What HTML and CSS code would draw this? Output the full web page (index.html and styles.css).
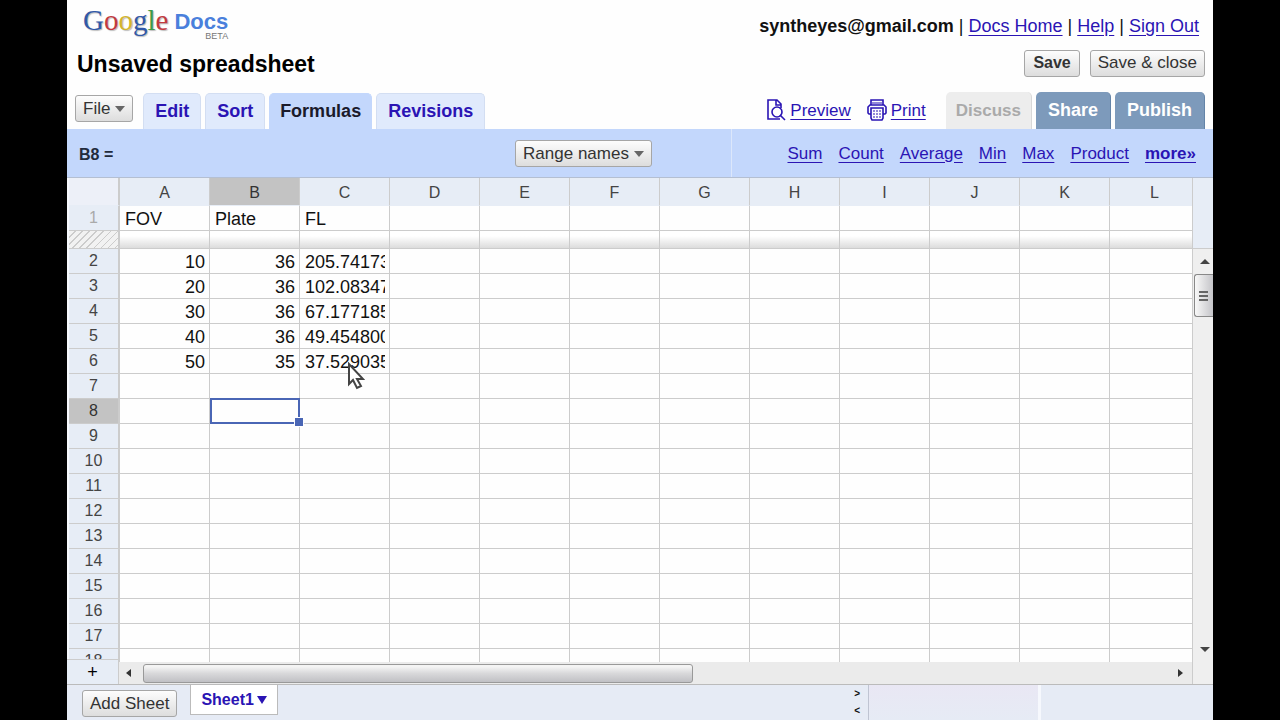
FILE: index.html
```html
<!DOCTYPE html>
<html lang="en">
<head>
  <meta charset="UTF-8" />
  <meta name="viewport" content="width=device-width, initial-scale=1.0"/>
  <title>Unsaved spreadsheet - Google Docs</title>
  <link rel="stylesheet" href="styles.css">
</head>
<body>
  <div class="app">
    <header class="header">
      <div class="top-bar">
        <div class="logo">
          <span class="logo-google"><span class="g-blue">G</span><span class="g-red">o</span><span class="g-yellow">o</span><span class="g-blue">g</span><span class="g-green">l</span><span class="g-red">e</span></span>
          <span class="logo-docs">Docs<small>BETA</small></span>
        </div>
        <div class="account"><b>syntheyes@gmail.com</b> | <a href="#">Docs Home</a> | <a href="#">Help</a> | <a href="#">Sign Out</a></div>
      </div>
      <div class="title-bar">
        <h1>Unsaved spreadsheet</h1>
        <div class="save-buttons">
          <button class="btn save">Save</button>
          <button class="btn">Save &amp; close</button>
        </div>
      </div>
      <div class="tab-bar">
        <button class="btn file">File <i class="caret"></i></button>
        <nav class="tabs">
          <a class="tab" href="#">Edit</a>
          <a class="tab" href="#">Sort</a>
          <a class="tab active" href="#">Formulas</a>
          <a class="tab" href="#">Revisions</a>
        </nav>
        <div class="actions">
          <a class="action" href="#">
            <svg width="20" height="22" viewBox="0 0 20 22" fill="none" stroke="#2a14b4" stroke-width="1.6">
              <path d="M7 20H2V1h9l4 4v4M10 1v5h5"/>
              <circle cx="11" cy="13" r="5"/>
              <path d="M14 16l5 5M7 20h7"/>
            </svg>
            <span>Preview</span>
          </a>
          <a class="action" href="#">
            <svg width="20" height="22" viewBox="0 0 20 22" fill="none" stroke="#2a14b4" stroke-width="1.6">
              <path d="M4 6V1h12v5M4 15H2L1 14V8l2-2h14l2 2v6l-1 1h-2"/>
              <path d="M4 9h12v10l-1 2H5l-1-2z"/>
              <path d="M6 12h8M6 15h8M6 18h8" stroke-dasharray="2 1" stroke-width="1"/>
              <path d="M5 4h10" stroke-width="1"/>
            </svg>
            <span>Print</span>
          </a>
        </div>
        <div class="share-tabs">
          <button class="share-tab discuss" disabled>Discuss</button>
          <button class="share-tab">Share</button>
          <button class="share-tab">Publish</button>
        </div>
      </div>
    </header>

    <div class="toolbar">
      <div class="toolbar-left">
        <span class="cell-name">B8 =</span>
        <button class="btn range">Range names <i class="caret"></i></button>
      </div>
      <div class="functions">
        <a href="#">Sum</a>
        <a href="#">Count</a>
        <a href="#">Average</a>
        <a href="#">Min</a>
        <a href="#">Max</a>
        <a href="#">Product</a>
        <a href="#"><b>more»</b></a>
      </div>
    </div>

    <main class="sheet">
      <div class="grid-side">
        <div class="grid-pane">
          <table class="grid">
            <thead><tr id="columns"></tr></thead>
            <tbody id="rows"></tbody>
          </table>
        </div>
        <div class="bottom-bar">
          <button class="add-row" aria-label="Add rows">+</button>
          <div class="hscroll">
            <i class="arrow-left"></i>
            <div class="hthumb"></div>
            <i class="arrow-right"></i>
          </div>
        </div>
      </div>
      <div class="vside">
        <div class="vtop"></div>
        <div class="vscroll">
          <i class="arrow-up"></i>
          <div class="vthumb"><i></i><i></i><i></i></div>
          <i class="arrow-down"></i>
        </div>
      </div>
      <svg class="cursor" width="18" height="28" viewBox="0 0 18 28">
        <path d="M2 2v20l4-4 4 8 4-2-4-7h6z" fill="#fff" stroke="#444" stroke-width="2"/>
      </svg>
    </main>

    <footer class="footer">
      <div class="sheets">
        <button class="btn add-sheet">Add Sheet</button>
        <button class="sheet-tab">Sheet1 <i class="caret"></i></button>
        <div class="movers"><span>&gt;</span><span>&lt;</span></div>
      </div>
      <div class="status"></div>
      <div class="status-end"></div>
    </footer>
  </div>
  <script src="script.js"></script>
</body>
</html>
```

FILE: styles.css
```css
* { box-sizing: border-box; }
body {
  margin: 0;
  background: #000;
  font-family: "Liberation Sans", Arial, sans-serif;
  font-size: 18px;
  color: #111;
}
a { color: #2a14b4; text-underline-offset: 3px; }
h1 { margin: 0; padding-top: 2px; font-size: 23px; line-height: 28px; color: #000; }
button { font-family: inherit; }
.app { display: flex; flex-direction: column; height: 100vh; margin: 0 67px; background: #fefefe; overflow: hidden; }

.top-bar { display: flex; justify-content: space-between; height: 46px; padding: 3px 14px 0 16px; }
.logo { display: flex; gap: 6px; }
.logo-google { font-family: "Liberation Serif", serif; font-size: 29px; line-height: 35px; text-shadow: 1px 1px 1px #bbb; }
.g-blue { color: #3159a8; }
.g-red { color: #c23a40; }
.g-yellow { color: #d4b52c; }
.g-green { color: #3f9a48; }
.logo-docs { display: flex; flex-direction: column; align-items: flex-end; padding-top: 8px; font-size: 22px; line-height: 21px; font-weight: bold; color: #4a80dc; }
.logo-docs small { font-size: 9px; line-height: 8px; font-weight: normal; color: #777; }
.account { line-height: 46px; }

.title-bar { display: flex; justify-content: space-between; align-items: center; height: 34px; padding: 0 8px 0 10px; }
.save-buttons { display: flex; gap: 10px; }
.btn {
  height: 27px;
  padding: 0 7px;
  border: 1px solid #a6a6a6;
  border-radius: 3px;
  background: linear-gradient(#fdfdfd, #ddd);
  font-size: 17px;
  line-height: 24px;
  color: #333;
  white-space: nowrap;
}
.save { padding: 0 8px; font-size: 16px; font-weight: bold; }
.caret { display: inline-block; border: 5px solid transparent; border-top: 6px solid #666; border-bottom: 0; vertical-align: 2px; }

.tab-bar { display: flex; align-items: flex-end; height: 49px; padding: 0 8px; }
.file { margin: 0 10px 7px 0; }
.tabs { display: flex; gap: 4px; }
.tab { height: 36px; padding: 0 11px; border: 1px solid #d3def2; border-bottom: 0; border-radius: 5px 5px 0 0; background: #e0eafc; font-weight: bold; line-height: 35px; text-decoration: none; }
.tab.active { padding: 0 10px; border-color: #c3d7fc; background: #c3d7fc; color: #1a1a2a; }
.actions { display: flex; gap: 16px; margin-left: auto; padding-bottom: 7px; }
.action { display: flex; align-items: center; gap: 4px; font-size: 17px; line-height: 22px; text-decoration: none; }
.action span { padding-top: 2px; text-decoration: underline; }
.share-tabs { display: flex; gap: 4px; margin-left: 20px; }
.share-tab { height: 37px; padding: 0 12px; border: 0; border-right: 1px solid #6484a8; border-radius: 5px 5px 0 0; background: #7d9abb; color: #fff; font-size: 18px; font-weight: bold; }
.discuss { padding: 0 10px; border-color: #d8d8d8; background: #ededed; color: #aaa; font-size: 17px; }

.toolbar { display: grid; grid-template-columns: 58% 1fr; height: 49px; border-bottom: 1px solid #b4bfd2; background: #c3d7fc; }
.toolbar-left { display: flex; justify-content: space-between; align-items: center; padding: 1px 79px 0 12px; border-right: 1px solid #dce7fb; }
.cell-name { padding-top: 2px; font-size: 16px; font-weight: bold; color: #222b3c; }
.functions { display: flex; justify-content: flex-end; align-items: center; gap: 16px; padding: 2px 17px 0 0; font-size: 17px; }

.sheet { position: relative; display: flex; flex: 1; min-height: 0; }
.grid-side { display: flex; flex: 1; flex-direction: column; min-width: 0; }
.grid-pane { flex: 1; min-height: 0; padding-left: 2px; background: linear-gradient(90deg, #f7f9fd 2px, #fefefe 2px); overflow: hidden; }
.grid { width: 1131px; border-collapse: separate; border-spacing: 0; table-layout: fixed; }
.grid th, .grid td { height: 25px; padding: 0; border: 0 solid #ccc; border-width: 0 1px 1px 0; line-height: 22px; overflow: hidden; white-space: nowrap; }
.grid th { padding-bottom: 1px; background: #e7edf6; font-size: 16px; font-weight: normal; color: #444; }
.grid thead th { width: 90px; height: 28px; padding: 2px 0 0; border-bottom-color: #e7edf6; }
.grid thead th:first-child { width: 51px; border-right-width: 2px; background: #edf0f8; }
.grid tbody th { border-right-width: 2px; }
.grid td { padding: 2px 4px 0 5px; font-size: 18px; }
.grid .num { text-align: right; }
.grid .value { display: block; overflow: hidden; }
.grid th.selected { background: #c3c3c3; color: #333; }
.grid .frozen th { color: #aaa; }
.grid .freeze-bar th, .grid .freeze-bar td { height: 18px; padding: 0; line-height: 16px; background: linear-gradient(#fff 30%, #dcdcdc); }
.grid .freeze-bar th { background: repeating-linear-gradient(135deg, #f2f2f2 0 4px, #ccc 4px 5px); }
.grid td.current { position: relative; overflow: visible; }
.current::before { content: ""; position: absolute; inset: -1px -1px -1px 0; border: 2px solid #4a66b5; }
.current::after { content: ""; position: absolute; right: -5px; bottom: -4px; width: 8px; height: 8px; border: 1px solid #fff; background: #4a66b5; }

.bottom-bar { display: flex; height: 22px; }
.add-row { position: relative; width: 52px; height: 25px; margin-top: -3px; padding: 0; border: 0 solid #ccc; border-width: 1px 1px 0 0; background: #e7edf6; font-size: 18px; line-height: 22px; }
.hscroll { display: flex; flex: 1; align-items: center; padding: 0 9px 0 7px; background: #ebebeb; }
.hthumb { width: 52%; height: 19px; margin-left: 12px; border: 1px solid #999; border-radius: 3px; background: linear-gradient(#f4f4f4 10%, #d8d8da 50%, #c0c0c4); }
.arrow-left, .arrow-right { border: 4px solid transparent; border-right: 5px solid #333; border-left: 0; }
.arrow-right { margin-left: auto; border-right: 0; border-left: 5px solid #333; }
.vside { display: flex; flex-direction: column; width: 21px; border-left: 1px solid #ccc; }
.vtop { height: 71px; border-bottom: 1px solid #ccc; background: #e7edf6; }
.vscroll { display: flex; flex: 1; flex-direction: column; align-items: flex-end; padding: 10px 3px 32px 0; background: #efefef; }
.arrow-up, .arrow-down { border: 5px solid transparent; border-top: 0; border-bottom: 5px solid #444; }
.arrow-down { margin-top: auto; border-top: 5px solid #444; border-bottom: 0; }
.vthumb { display: flex; flex-direction: column; justify-content: center; gap: 2px; width: 19px; height: 43px; margin: 10px -3px 0 0; padding-left: 4px; border: 1px solid #888; border-right: 0; border-radius: 3px 0 0 3px; background: linear-gradient(90deg, #f8f8f8, #c4c4c8); }
.vthumb i { width: 9px; height: 2px; background: #666; }
.cursor { position: absolute; left: 280px; top: 184px; }

.footer { display: grid; grid-template-columns: 70% 15% 1fr; height: 36px; border-top: 1px solid #bbb; background: #e6ebf5; }
.sheets { display: flex; align-items: flex-start; padding: 0 8px 0 15px; border-right: 1px solid #bfc4d2; }
.add-sheet { margin: 5px 13px 0 0; }
.sheet-tab { height: 30px; padding: 0 10px; border: 1px solid #bbb; border-top: 0; background: #fff; color: #2a14b4; font-size: 16px; font-weight: bold; line-height: 26px; }
.sheet-tab .caret { margin-left: -1px; border-width: 8px 5px 0; border-top-color: #2a14b4; vertical-align: 1px; }
.movers { display: flex; flex-direction: column; margin-left: auto; font-size: 10px; font-weight: bold; line-height: 17px; }
.status { border-right: 3px solid #f6f8fd; background: linear-gradient(#e9e7f4, #e6ebf5); }
```

FILE: script.js
```javascript
const columns = ['A', 'B', 'C', 'D', 'E', 'F', 'G', 'H', 'I', 'J', 'K', 'L'];
const cells = {
  A1: 'FOV', B1: 'Plate', C1: 'FL',
  A2: 10, B2: 36, C2: '205.74173',
  A3: 20, B3: 36, C3: '102.08347',
  A4: 30, B4: 36, C4: '67.177185',
  A5: 40, B5: 36, C5: '49.454800',
  A6: 50, B6: 35, C6: '37.529035'
};
const current = { column: 'B', row: 8 };

function drawColumns() {
  const names = columns.map(c => `<th scope="col" class="${c === current.column ? 'selected' : ''}">${c}</th>`);
  document.getElementById('columns').innerHTML = '<th></th>' + names.join('');
}

function drawCell(column, row) {
  const value = cells[column + row];
  if (column === current.column && row === current.row) return '<td class="current"></td>';
  if (value === undefined) return '<td></td>';
  return `<td class="${typeof value === 'number' ? 'num' : ''}"><span class="value">${value}</span></td>`;
}

function drawRows() {
  let html = '';
  for (let row = 1; row <= 18; row++) {
    html += `<tr class="${row === 1 ? 'frozen' : ''}"><th scope="row" class="${row === current.row ? 'selected' : ''}">${row}</th>`;
    html += columns.map(c => drawCell(c, row)).join('') + '</tr>';
    if (row === 1) html += '<tr class="freeze-bar"><th></th>' + '<td></td>'.repeat(columns.length) + '</tr>';
  }
  document.getElementById('rows').innerHTML = html;
}

drawColumns();
drawRows();
```
